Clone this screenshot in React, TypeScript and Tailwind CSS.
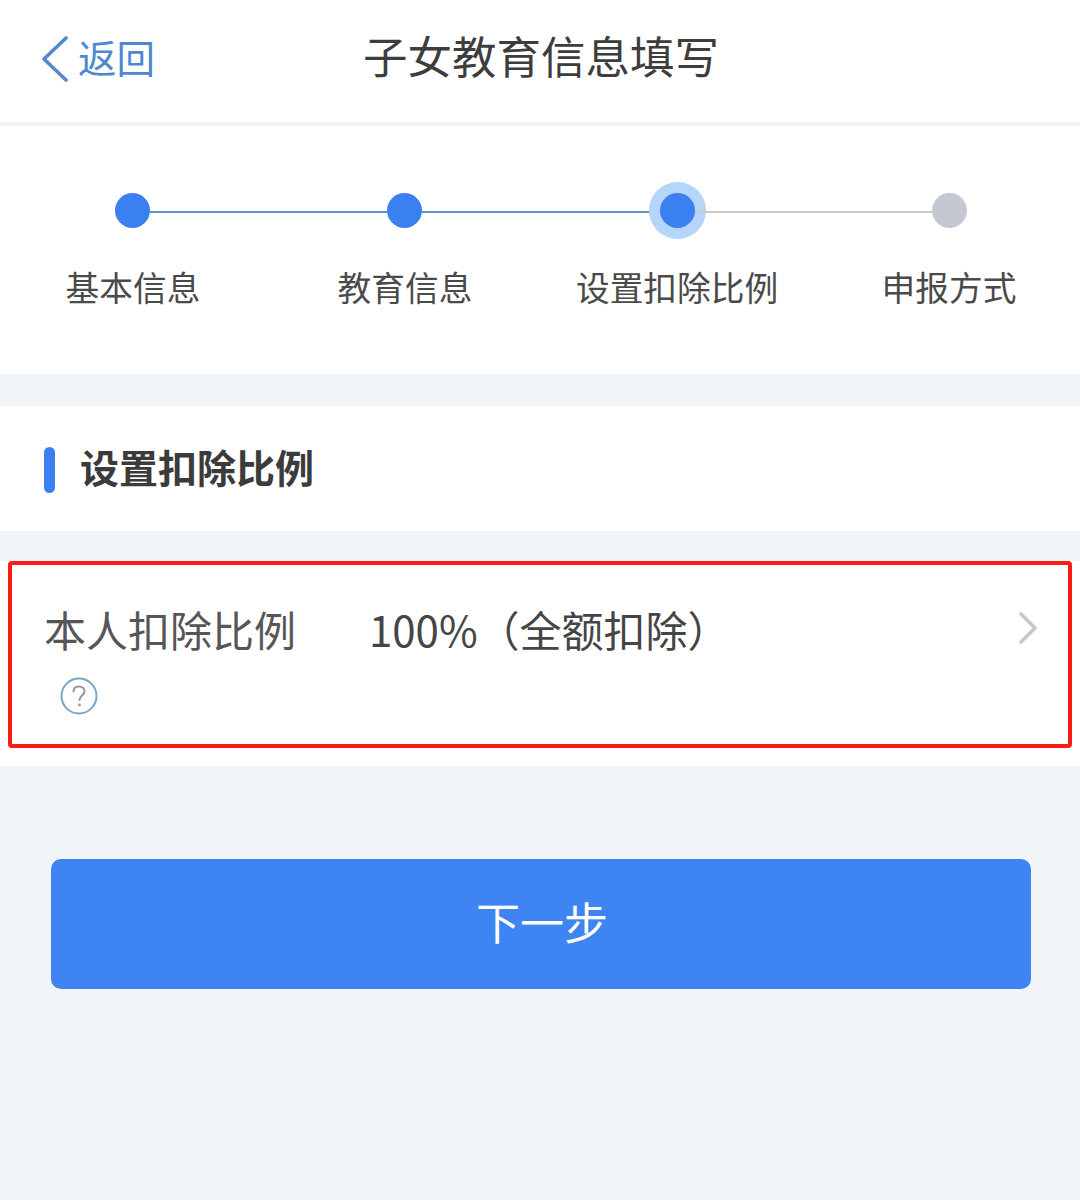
import React from "react";

const cjk = "font-['Noto_Sans_CJK_SC','Noto_Sans',sans-serif]";

function Header() {
  return (
    <div className="relative h-[122px] bg-white flex items-center justify-center">
      <div className="absolute left-[40px] top-[36px] flex items-center gap-[6px] text-[#4f88d2]">
        <svg width="32" height="46" viewBox="0 0 32 46" fill="none" stroke="#5689cc" strokeWidth="3.6" strokeLinecap="round" strokeLinejoin="round">
          <path d="M26 2 L4 23 L26 44" />
        </svg>
        <span className="text-[38.5px] leading-[46px] mt-[-6px]">返回</span>
      </div>
      <div className="text-[44.5px] leading-[56px] text-[#3d3d3d] ml-[2px] mt-[-12px]">子女教育信息填写</div>
    </div>
  );
}

function Steps() {
  const labels = ["基本信息", "教育信息", "设置扣除比例", "申报方式"];
  return (
    <div className="bg-white h-[248px] pt-[66px]">
      <div className="flex items-center pl-[115px] pr-[113px] h-[36px]">
        <div className="w-[35px] h-[35px] rounded-full bg-[#3a80f0] shrink-0" />
        <div className="flex-1 h-[2px] mt-[3px] bg-[#5f92cc]" />
        <div className="w-[35px] h-[35px] rounded-full bg-[#3a80f0] shrink-0" />
        <div className="flex-1 h-[2px] mt-[3px] bg-[#5f92cc]" />
        <div className="w-[35px] h-[35px] rounded-full bg-[#3a80f0] shrink-0 ring-[11px] ring-[#b5d5fa]" />
        <div className="flex-1 h-[2px] mt-[3px] bg-[#c9cacc]" />
        <div className="w-[35px] h-[35px] rounded-full bg-[#c3c8d2] shrink-0" />
      </div>
      <div className="flex justify-between pl-[33px] pr-[31px] mt-[37px]">
        {labels.map((l) => (
          <div key={l} className="w-[200px] whitespace-nowrap flex justify-center text-[33.7px] leading-[44px] text-[#4a4a4a]">
            {l}
          </div>
        ))}
      </div>
    </div>
  );
}

function Section() {
  return (
    <div className="bg-white h-[125px] flex items-center pl-[44px] mt-[32px]">
      <div className="w-[11px] h-[46px] rounded-full bg-[#3a80f0] mt-[3px]" />
      <div className="ml-[25px] text-[39px] leading-[50px] font-bold text-[#3b3b3b] mt-[-6px]">设置扣除比例</div>
    </div>
  );
}

function DeductRow() {
  return (
    <div className="relative bg-white h-[205px] mt-[30px] pl-[44px] pt-[41px]">
      <div className="flex items-start">
        <div className="w-[325px]">
          <div className="text-[42px] leading-[54px] text-[#565656]">本人扣除比例</div>
          <div className="ml-[16px] mt-[21px] w-[38px] h-[38px]">
            <svg width="38" height="38" viewBox="0 0 38 38" fill="none">
              <circle cx="19" cy="19" r="17.5" stroke="#7ba4c4" strokeWidth="2" />
              <path d="M13.5 14.5 C13.5 11 16 9.5 19 9.5 C22 9.5 24.5 11.5 24.5 14.5 C24.5 18 19.5 18.5 19.5 23" stroke="#8c9aa6" strokeWidth="2" strokeLinecap="round" />
              <circle cx="19.5" cy="28" r="1.4" fill="#8c9aa6" />
            </svg>
          </div>
        </div>
        <div className="text-[42px] leading-[54px] text-[#454545] whitespace-nowrap">100%（全额扣除）</div>
      </div>
      <svg className="absolute left-[1017px] top-[50px]" width="22" height="34" viewBox="0 0 22 34" fill="none" stroke="#c8c8c8" strokeWidth="3.6" strokeLinecap="round" strokeLinejoin="round">
        <path d="M4 3 L18 17 L4 31" />
      </svg>
      <div className="absolute left-[8px] right-[8px] top-0 h-[187px] border-[4px] border-[#fb1c14] rounded-[4px]" />
    </div>
  );
}

export default function App() {
  return (
    <div className={`w-[1080px] h-[1200px] bg-[#f2f5f8] overflow-hidden ${cjk}`}>
      <Header />
      <div className="h-[4px] bg-[#f1f1f1]" />
      <Steps />
      <Section />
      <DeductRow />
      <div className="ml-[51px] mr-[49px] mt-[93px] h-[130px] rounded-[10px] bg-[#3f84f3] flex items-center justify-center text-white text-[44px]">
        <span className="mt-[-6px] ml-[2px]">下一步</span>
      </div>
    </div>
  );
}
